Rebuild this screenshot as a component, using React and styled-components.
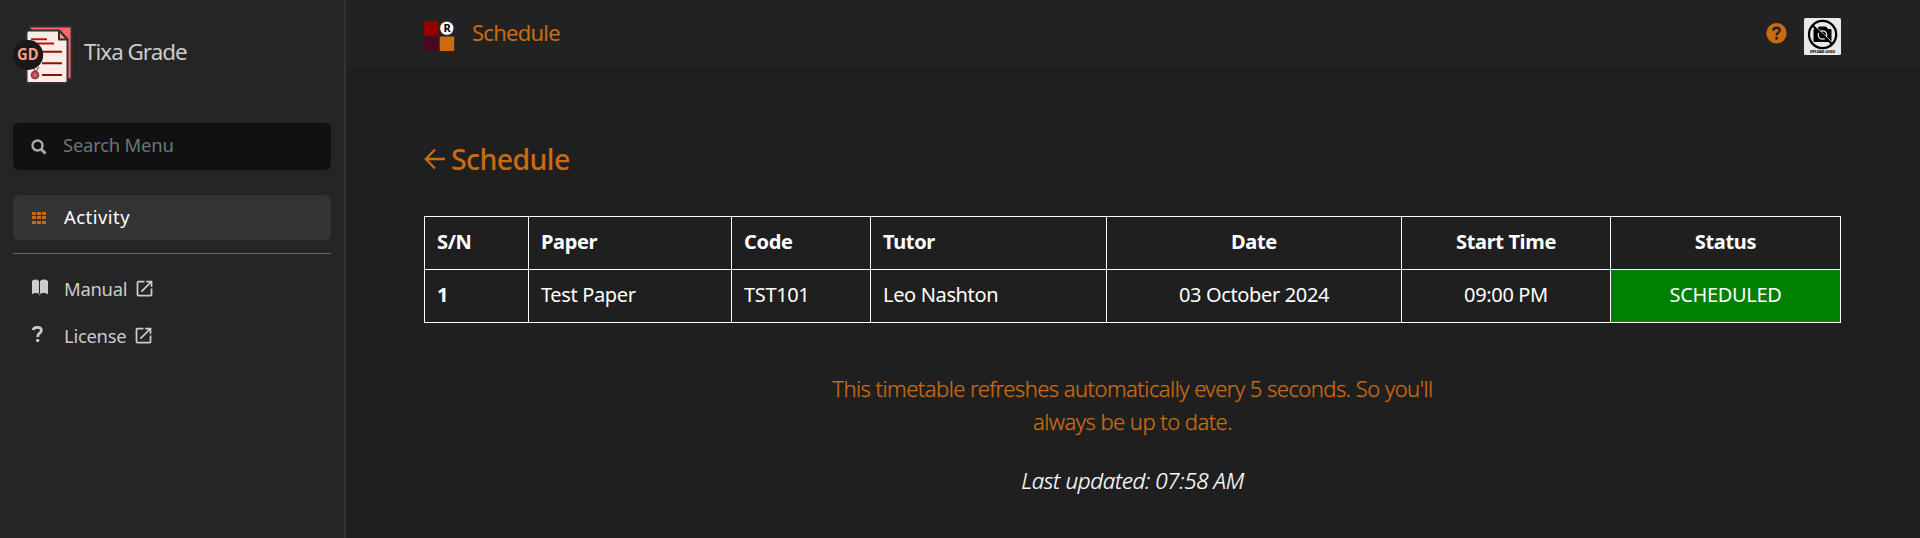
import React from 'react';
import styled, { createGlobalStyle } from 'styled-components';
import { MdOpenInNew } from 'react-icons/md';

const GlobalStyle = createGlobalStyle`
  * {
    box-sizing: border-box;
  }

  body {
    margin: 0;
    background: #1f1f1f;
    color: #fff;
    font-family: 'Noto Sans', 'Open Sans', sans-serif;
    overflow: hidden;
  }
`;

const Layout = styled.div`
  display: flex;
  height: 538px;
`;

// Left hand menu
const Sidebar = styled.aside`
  width: 346px;
  flex-shrink: 0;
  padding: 24px 13px 0;
  background: #252525;
  border-right: 2px solid #333;
`;

const Brand = styled.div`
  display: flex;
  align-items: flex-start;
  height: 99px;
`;

const BrandName = styled.span`
  margin-left: 11px;
  padding-top: 12px;
  color: #ccc;
  font-size: 22.4px;
  line-height: 32px;
  letter-spacing: -0.98px;
`;

const SearchBox = styled.label`
  display: flex;
  align-items: center;
  height: 47px;
  padding-left: 18px;
  background: #111;
  border-radius: 5px;
`;

const SearchInput = styled.input`
  flex: 1;
  min-width: 0;
  height: 45px;
  margin-left: 16px;
  padding: 0 0 4px;
  border: 0;
  outline: 0;
  background: transparent;
  color: #ccc;
  font-family: inherit;
  font-size: 18.4px;
  letter-spacing: -0.2px;

  &::placeholder {
    color: #6c757d;
    opacity: 1;
  }
`;

const MenuItem = styled.a`
  display: flex;
  align-items: center;
  height: 45px;
  padding-left: 18px;
  border-radius: 5px;
  background: ${({ $active }) => ($active ? '#333' : 'transparent')};
  color: ${({ $active }) => ($active ? '#fff' : '#ccc')};
  font-size: 18.4px;
  line-height: 28px;
  letter-spacing: ${({ $active }) => ($active ? '0.5px' : '-0.25px')};
  text-decoration: none;

  span {
    padding-bottom: 2px;
  }
`;

const MenuIcon = styled.i`
  display: flex;
  width: 33px;
  padding-bottom: ${({ $lift }) => $lift || 0}px;
`;

const ExternalIcon = styled(MdOpenInNew)`
  width: 21px;
  height: 21px;
  margin: 0 0 2px 7px;
`;

const MainMenu = styled.nav`
  padding: 25px 0 13px;
  border-bottom: 1px solid #666;
`;

const LinkMenu = styled.nav`
  display: flex;
  flex-direction: column;
  gap: 2px;
  padding-top: 13px;
`;

// Right hand side
const Main = styled.main`
  flex: 1;
  min-width: 0;
`;

const TopBar = styled.header`
  display: flex;
  align-items: flex-start;
  height: 68px;
  padding: 18px 79px 0 78px;
  background: #222;
`;

const PageName = styled.span`
  flex: 1;
  margin: -1px 0 0 17px;
  color: #c96b13;
  font-size: 22px;
  line-height: 30px;
  letter-spacing: -0.75px;
`;

const HelpIcon = styled.svg`
  margin: 5px 17px 0 0;
`;

const Content = styled.div`
  padding: 71px 79px 0 78px;
`;

const Heading = styled.h2`
  display: flex;
  align-items: center;
  gap: 5px;
  height: 40px;
  margin: 0 0 37px;
  color: #c96b13;
  font-size: 28.5px;
  font-weight: 500;
  line-height: 40px;
  letter-spacing: -0.6px;
`;

const Timetable = styled.table`
  width: 1417px;
  border-collapse: collapse;
  table-layout: fixed;
  font-size: 20px;
  line-height: 30px;
`;

const Cell = styled.td`
  height: 53px;
  padding: 0 12px 2px;
  border: 1px solid #fff;
  text-align: ${({ $align }) => $align || 'left'};
  font-weight: ${({ $bold }) => ($bold ? 700 : 400)};
  letter-spacing: -0.35px;
  white-space: nowrap;
`;

const StatusCell = styled(Cell)`
  background: green;
`;

const Notice = styled.p`
  width: 640px;
  margin: 49px auto 0;
  color: #c96b13;
  font-size: 22px;
  font-weight: 300;
  line-height: 33px;
  letter-spacing: -0.54px;
  text-align: center;
  -webkit-text-stroke: 0.25px;
`;

const Updated = styled.p`
  margin: 26px 0 0;
  font-size: 22.4px;
  font-style: italic;
  font-weight: 300;
  line-height: 33px;
  letter-spacing: -0.35px;
  text-align: center;
  -webkit-text-stroke: 0.2px;
`;

const GradeLogo = () => (
  <svg width="60" height="62" viewBox="0 0 60 62">
    <path d="M17 2.5H58.5V55H50V15L17 6Z" fill="#ff6470" stroke="#303234" strokeWidth="2" strokeLinejoin="round" />
    <path d="M15 6.5H46L54.5 15.5V57Q54.5 59 52.5 59H15.5Q13.5 59 13.5 57V8Z" fill="#ffebe5" stroke="#2f3133" strokeWidth="2" />
    <path d="M46 6.5V15.5H54.5Z" fill="#ff9c83" stroke="#2f3133" strokeWidth="2" strokeLinejoin="round" />
    <path d="M18 15.3H34M24 19.4H41" stroke="#b51708" strokeWidth="2" />
    <path d="M29 27.8H49M29 39.3H49M29 51H49" stroke="#851307" strokeWidth="2" />
    <path d="M20 43L23 49M26 43L22 49" stroke="#8a4a50" strokeWidth="1.2" />
    <circle cx="22" cy="51" r="3.7" fill="#b8505b" stroke="#8b2c3d" strokeWidth="1.2" />
    <circle cx="22" cy="51" r="1.2" fill="#f07078" />
    <circle cx="15.2" cy="31" r="15" fill="#191919" />
    <text x="14.8" y="36.3" textAnchor="middle" textLength="21.5" lengthAdjust="spacingAndGlyphs" fontSize="16" fontWeight="700" fill="#ff9c83">
      GD
    </text>
  </svg>
);

const SearchIcon = () => (
  <svg width="16" height="16" viewBox="0 0 16 16" fill="none" stroke="#aaa">
    <circle cx="6.5" cy="6.5" r="5" strokeWidth="2.4" />
    <path d="M10.2 10.2L14.5 14.5" strokeWidth="3" />
  </svg>
);

const GridIcon = () => (
  <svg width="16" height="14" viewBox="0 0 16 14" fill="#c96b13">
    {[1, 6, 11].map((x) => [1, 5, 10].map((y) => (
      <rect key={`${x}-${y}`} x={x} y={y} width="4" height="3" />
    )))}
  </svg>
);

const BookIcon = () => (
  <svg width="17" height="17" viewBox="0 0 17 17" fill="#ccc">
    <path d="M1 2Q4.5 -.8 8 2V14.8Q4.5 12.8 1 15.3ZM9 2Q12.5 -.8 17 2V15.3Q12.5 12.8 9 14.8Z" />
    <path d="M8 15H9.5L8.8 16.5Z" />
  </svg>
);

const QuestionIcon = () => (
  <svg width="14" height="18" viewBox="0 0 14 18" fill="none" stroke="#ccc" strokeWidth="2.8">
    <path d="M2.3 5.2Q2.5 2.3 6.3 2.3Q10.5 2.3 10.3 5.5Q10.2 7.1 8.3 8.4Q6.7 9.5 6.7 11.9" />
    <circle cx="6.7" cy="15.5" r="1.7" fill="#ccc" stroke="none" />
  </svg>
);

const TilesLogo = () => (
  <svg width="31" height="34" viewBox="0 0 31 34">
    <rect y="3" width="14.5" height="14.5" rx="1" fill="#920000" />
    <rect y="18.5" width="14.5" height="14.5" rx="1" fill="#4b0622" />
    <rect x="15.7" y="18.5" width="14.5" height="14.5" rx="1" fill="#cb6c14" />
    <circle cx="22.8" cy="10.3" r="7" fill="#fff" stroke="#111" strokeWidth=".6" />
    <text x="23" y="14.2" textAnchor="middle" fontSize="11" fontWeight="700" fill="#000">R</text>
  </svg>
);

const UploadLogo = () => (
  <svg width="37" height="37" viewBox="0 0 37 37">
    <rect width="37" height="37" rx="1.5" fill="#e9e9e9" />
    <path d="M10 11.5H13L15 9H22L24 11.5H27V23.5H10Z" fill="#000" stroke="#000" strokeLinejoin="round" />
    <circle cx="18.5" cy="17" r="4.2" fill="none" stroke="#e9e9e9" strokeWidth="1.3" />
    <path d="M9.5 6.5L29.5 25.5" stroke="#e9e9e9" strokeWidth="1" />
    <circle cx="18.6" cy="16.5" r="13.6" fill="none" stroke="#000" strokeWidth="2.3" />
    <path d="M8.5 7.5L28 26" stroke="#000" strokeWidth="2.3" />
    <text x="18.5" y="35.3" textAnchor="middle" textLength="25" lengthAdjust="spacingAndGlyphs" fontSize="3.6" fontWeight="900" fill="#000">
      UPLOAD LOGO
    </text>
  </svg>
);

const columns = [
  { label: 'S/N', width: 104 },
  { label: 'Paper', width: 203 },
  { label: 'Code', width: 139 },
  { label: 'Tutor', width: 236 },
  { label: 'Date', width: 295, align: 'center' },
  { label: 'Start Time', width: 209, align: 'center' },
  { label: 'Status', width: 230, align: 'center' },
];

const papers = [
  { paper: 'Test Paper', code: 'TST101', tutor: 'Leo Nashton', date: '03 October 2024', start: '09:00 PM', status: 'SCHEDULED' },
];

const App = () => (
  <>
    <GlobalStyle />
    <Layout>
      <Sidebar>
        <Brand>
          <GradeLogo />
          <BrandName>Tixa Grade</BrandName>
        </Brand>
        <SearchBox>
          <SearchIcon />
          <SearchInput placeholder="Search Menu" />
        </SearchBox>
        <MainMenu>
          <MenuItem $active>
            <MenuIcon><GridIcon /></MenuIcon>
            <span>Activity</span>
          </MenuItem>
        </MainMenu>
        <LinkMenu>
          <MenuItem>
            <MenuIcon $lift={5}><BookIcon /></MenuIcon>
            <span>Manual</span>
            <ExternalIcon />
          </MenuItem>
          <MenuItem>
            <MenuIcon $lift={5}><QuestionIcon /></MenuIcon>
            <span>License</span>
            <ExternalIcon />
          </MenuItem>
        </LinkMenu>
      </Sidebar>

      <Main>
        <TopBar>
          <TilesLogo />
          <PageName>Schedule</PageName>
          <HelpIcon width="21" height="21" viewBox="0 0 21 21">
            <circle cx="10.5" cy="10.2" r="10.2" fill="#c96b13" />
            <path d="M7.2 7.7Q7.4 4.8 10.5 4.8Q13.7 4.8 13.7 7.5Q13.6 8.8 12.1 9.7Q10.6 10.6 10.6 12.5" fill="none" stroke="#222" strokeWidth="2.4" />
            <circle cx="10.6" cy="15.2" r="1.5" fill="#222" />
          </HelpIcon>
          <UploadLogo />
        </TopBar>

        <Content>
          <Heading>
            <svg width="22" height="22" viewBox="0 0 22 22" fill="none" stroke="#c96b13" strokeWidth="2.3">
              <path d="M21 11H2M11 1.5L1.8 11L11 20.5" />
            </svg>
            Schedule
          </Heading>
          <Timetable>
            <colgroup>
              {columns.map((c) => <col key={c.label} width={c.width} />)}
            </colgroup>
            <thead>
              <tr>
                {columns.map((c) => (
                  <Cell as="th" key={c.label} $bold $align={c.align}>{c.label}</Cell>
                ))}
              </tr>
            </thead>
            <tbody>
              {papers.map((row, i) => (
                <tr key={row.code}>
                  <Cell as="th" $bold>{i + 1}</Cell>
                  <Cell>{row.paper}</Cell>
                  <Cell>{row.code}</Cell>
                  <Cell>{row.tutor}</Cell>
                  <Cell $align="center">{row.date}</Cell>
                  <Cell $align="center">{row.start}</Cell>
                  <StatusCell $align="center">{row.status}</StatusCell>
                </tr>
              ))}
            </tbody>
          </Timetable>
          <Notice>This timetable refreshes automatically every 5 seconds. So you'll always be up to date.</Notice>
          <Updated>Last updated: 07:58 AM</Updated>
        </Content>
      </Main>
    </Layout>
  </>
);

export default App;
